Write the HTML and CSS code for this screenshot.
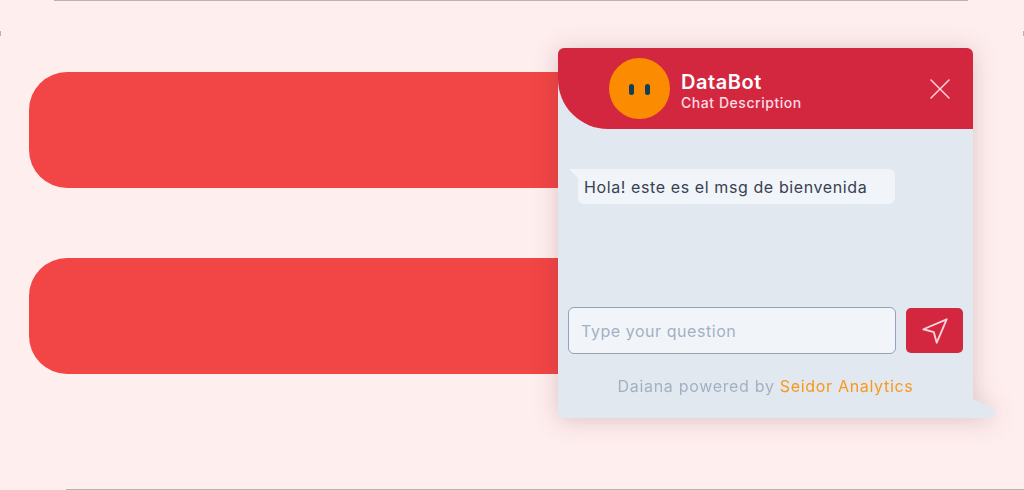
FILE: index.html
```html
<!DOCTYPE html>
<html>

<head>
    <title>DataBot</title>
    <link rel="stylesheet" href="styles.css">
</head>

<body>
    <div class="page">
        <div class="rule rule-top"></div>
        <div class="bars">
            <div class="bar"></div>
            <div class="bar"></div>
        </div>
        <div class="rule rule-bottom"></div>

        <span class="edge-mark edge-left"></span>
        <span class="edge-mark edge-right"></span>

        <div class="chat">
            <div class="chat-header">
                <div class="avatar">
                    <span class="eye"></span>
                    <span class="eye"></span>
                </div>
                <div class="chat-title">
                    <div class="chat-name">DataBot</div>
                    <div class="chat-desc">Chat Description</div>
                </div>
                <svg class="close-icon" width="24" height="24" viewBox="0 0 24 24" fill="none" stroke="currentColor" stroke-width="1.5" stroke-linecap="round">
                    <line x1="3" y1="3" x2="21" y2="21" />
                    <line x1="21" y1="3" x2="3" y2="21" />
                </svg>
            </div>
            <div class="chat-body">
                <div class="message">Hola! este es el msg de bienvenida</div>
            </div>
            <div class="chat-input">
                <div class="question">Type your question</div>
                <button class="send" type="button">
                    <svg width="28" height="28" viewBox="0 0 24 24" fill="none" stroke="currentColor" stroke-width="1.6" stroke-linecap="round" stroke-linejoin="round">
                        <polygon points="2 10.5 22 2 13.5 22 11 13 2 10.5" />
                    </svg>
                </button>
            </div>
            <div class="chat-footer">Daiana powered by <span class="brand">Seidor Analytics</span></div>
            <svg class="chat-tail" width="22" height="19" viewBox="0 0 22 19">
                <path d="M0 0 L18 8 Q22 10 22 14 Q22 19 16 19 L0 19 Z" fill="#E2E8F0" />
            </svg>
        </div>
    </div>
</body>

</html>
```

FILE: styles.css
```css
/* General Styles */
* {
    box-sizing: border-box;
}

html,
body {
    margin: 0;
    height: 100%;
}

body {
    background-color: #FFEEEE;
    font-family: Inter, Arial, sans-serif;
    overflow: hidden;
}

.page {
    position: relative;
    display: flex;
    flex-direction: column;
    height: 490px;
}

.rule {
    height: 1px;
    background-color: #B9B4B4;
}

.rule-top {
    margin: 0 56px 0 54px;
}

.rule-bottom {
    margin: auto 0 0 66px;
}

.edge-mark {
    position: absolute;
    top: 31px;
    width: 1px;
    height: 5px;
    background-color: #B9B4B4;
}

.edge-left {
    left: 0;
}

.edge-right {
    right: 0;
}

/* Red bars behind the chat */
.bars {
    display: flex;
    flex-direction: column;
    gap: 70px;
    margin: 71px 0 0 29px;
}

.bar {
    width: 600px;
    height: 116px;
    background-color: #F24545;
    border-radius: 38px;
}

/* Chat Styles */
.chat {
    position: absolute;
    left: 558px;
    top: 48px;
    display: flex;
    flex-direction: column;
    width: 415px;
    height: 370px;
    background-color: #E2E8F0;
    border-radius: 6px 6px 0 6px;
    filter: drop-shadow(0 2px 12px rgba(90, 40, 40, 0.22));
}

.chat-header {
    display: flex;
    align-items: center;
    height: 81px;
    padding: 0 21px 0 51px;
    background-color: #D32740;
    border-radius: 6px 6px 0 50px;
}

.avatar {
    display: flex;
    align-items: center;
    justify-content: center;
    gap: 11px;
    width: 61px;
    height: 61px;
    background-color: #FB8B00;
    border-radius: 50%;
}

.eye {
    width: 5px;
    height: 11px;
    background-color: #143E56;
    border-radius: 3px;
    margin-top: 1px;
}

.chat-title {
    flex: 1;
    margin: 5px 0 0 11px;
    color: #FFF;
}

.chat-name {
    font-size: 20px;
    font-weight: 600;
    line-height: 24px;
    letter-spacing: 0.55px;
}

.chat-desc {
    font-size: 14px;
    font-weight: 500;
    line-height: 18px;
    letter-spacing: 0.55px;
    color: #FBDCE1;
}

.close-icon {
    color: #F8D3D9;
    margin-top: 1px;
}

.chat-body {
    flex: 1;
    padding: 40px 0 0 20px;
}

.message {
    position: relative;
    width: 317px;
    height: 35px;
    padding-left: 6px;
    font-size: 16px;
    line-height: 36px;
    letter-spacing: 0.6px;
    color: #374151;
    background-color: #F1F5F9;
    border-radius: 0 6px 6px 6px;
}

.message::before {
    content: "";
    position: absolute;
    left: -9px;
    top: 0;
    border-top: 9px solid #F1F5F9;
    border-left: 9px solid transparent;
}

.chat-input {
    display: flex;
    align-items: center;
    gap: 10px;
    padding: 0 10px;
}

.question {
    flex: 1;
    height: 47px;
    padding-left: 12px;
    font-size: 16px;
    line-height: 47px;
    letter-spacing: 0.55px;
    color: #A3B0C4;
    background-color: #F1F5F9;
    border: 1px solid #94A3B8;
    border-radius: 6px;
}

.send {
    display: flex;
    align-items: center;
    justify-content: center;
    width: 57px;
    height: 45px;
    padding: 0;
    color: #F8D3D9;
    background-color: #D32740;
    border: 0;
    border-radius: 5px;
}

.chat-footer {
    height: 64px;
    padding-top: 22px;
    font-size: 16px;
    line-height: 20px;
    letter-spacing: 0.68px;
    text-align: center;
    color: #A3B0C4;
}

.brand {
    color: #F7981D;
}

.chat-tail {
    position: absolute;
    left: 100%;
    bottom: 0;
}
```
